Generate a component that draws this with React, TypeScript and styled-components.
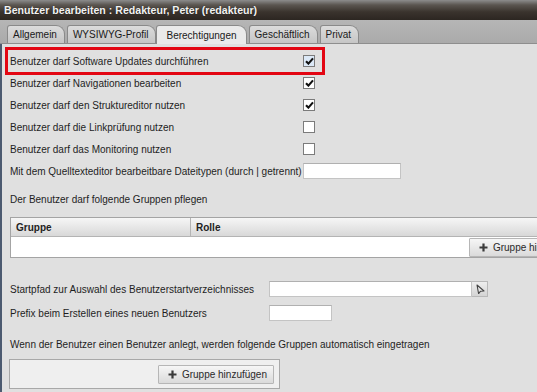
import React from 'react';
import styled, { createGlobalStyle, css } from 'styled-components';

const GlobalStyle = createGlobalStyle`
  html, body {
    margin: 0;
    padding: 0;
    overflow: hidden;
    background: #e0e0e0;
  }
  body {
    font-family: 'Liberation Sans', Arial, sans-serif;
    font-size: 10px;
    color: #1e1e1e;
  }
`;

const Window = styled.div`
  width: 600px;
  height: 392px;
  display: flex;
  flex-direction: column;
`;

const TitleBar = styled.div`
  height: 20px;
  flex: none;
  display: flex;
  align-items: center;
  padding-left: 4px;
  background: linear-gradient(#8c8c8c 0%, #5a5550 25%, #3a332d 60%, #2c2621 100%);
  color: #f2f2f2;
  font-weight: bold;
  font-size: 10.6px;
  text-shadow: 0 0 1px rgba(0, 0, 0, 0.6);
`;

const TabBar = styled.div`
  height: 23px;
  flex: none;
  display: flex;
  align-items: flex-end;
  gap: 2px;
  padding-left: 7px;
  background: linear-gradient(#b6b6b6, #aaaaaa);
  border-bottom: 1px solid #8e8e8e;
`;

const Tab = styled.div<{ active?: boolean }>`
  height: 17px;
  display: flex;
  align-items: center;
  padding: 0 7px 0 5px;
  border: 1px solid #8a8a8a;
  border-bottom: none;
  border-radius: 3px 9px 0 0;
  font-size: 10px;
  color: #1a1a1a;
  background: linear-gradient(#dcdcdc, #c6c6c6);
  ${({ active }) =>
    active &&
    css`
      position: relative;
      height: 18px;
      margin: 0 0 -1px -2px;
      padding: 0 9px 0 9px;
      background: #eaeaea;
    `}
`;

const Content = styled.div`
  flex: 1;
  background: #e0e0e0;
  border-left: 2px solid #4c5a70;
  padding: 6px 0 0 6px;
  display: flex;
  flex-direction: column;
  align-items: flex-start;
`;

const Row = styled.div<{ highlighted?: boolean; labelWidth?: number; gap?: number }>`
  height: 22px;
  width: 314px;
  margin-top: ${({ gap = 0 }) => gap}px;
  display: grid;
  grid-template-columns: ${({ labelWidth = 293 }) => labelWidth}px auto;
  align-items: center;
  padding-left: 2px;
  box-sizing: border-box;
  ${({ highlighted }) =>
    highlighted &&
    css`
      outline: 3px solid #e30613;
      outline-offset: -0.5px;
    `}
`;

const FormRow = styled(Row)`
  width: auto;
`;

const Label = styled.span`
  white-space: nowrap;
`;

const CheckBox = styled.span<{ focused?: boolean }>`
  width: 10px;
  height: 10px;
  border: 1px solid #7b7b7b;
  background: ${({ focused }) => (focused ? '#dce9f7' : '#ffffff')};
  display: flex;
  align-items: center;
  justify-content: center;
`;

const TextInput = styled.div<{ width: number }>`
  width: ${({ width }) => width}px;
  height: 14px;
  background: #fff;
  border: 1px solid #c4c4c4;
  border-top-color: #b0b0b0;
`;

const PickerField = styled.div`
  display: flex;
  align-items: center;
`;

const PickerButton = styled.div`
  width: 15px;
  height: 14px;
  border: 1px solid #b8b8b8;
  border-left: none;
  background: linear-gradient(#eeeeee, #d4d4d4);
  display: flex;
  align-items: center;
  justify-content: center;
`;

const SectionText = styled.div<{ gap: number }>`
  margin-top: ${({ gap }) => gap}px;
  margin-left: 2px;
  height: 14px;
  line-height: 14px;
  white-space: nowrap;
`;

const GroupTable = styled.div`
  margin: 10px 0 20px 2px;
  width: 578px;
  border: 1px solid #a4a4a4;
  background: #fff;
`;

const TableHead = styled.div`
  height: 18px;
  display: grid;
  grid-template-columns: 179px 1fr;
  background: linear-gradient(#f6f6f6, #d8d8d8);
  border-bottom: 1px solid #b4b4b4;
  font-weight: bold;
  color: #222;
`;

const HeadCell = styled.div`
  display: flex;
  align-items: center;
  padding-left: 5px;
  & + & {
    border-left: 1px solid #b4b4b4;
  }
`;

const TableBody = styled.div`
  height: 20px;
  display: flex;
  align-items: center;
  justify-content: flex-end;
  padding-right: 4px;
`;

const AddButton = styled.div`
  height: 17px;
  display: flex;
  align-items: center;
  gap: 5px;
  padding: 0 6px 0 9px;
  border: 1px solid #b6b6b6;
  border-radius: 1px;
  background: linear-gradient(#f6f6f6, #dadada);
  color: #2a2a2a;
  white-space: nowrap;
`;

const AutoGroupBox = styled.div`
  margin: 7px 0 0 1px;
  width: 264px;
  height: 28px;
  border: 1px solid #a8a8a8;
  background: #efefef;
  display: flex;
  align-items: center;
  justify-content: flex-end;
  padding-right: 5px;
`;

const Check = () => (
  <svg width="9" height="8" viewBox="0 0 9 8">
    <path d="M1 4.2 L3.4 6.6 L8 1.4" fill="none" stroke="#111" strokeWidth="2.1" />
  </svg>
);

const Plus = () => (
  <svg width="9" height="9" viewBox="0 0 9 9">
    <path d="M4.5 0.5 V8.5 M0.5 4.5 H8.5" stroke="#3a3a3a" strokeWidth="2.2" />
  </svg>
);

const Pointer = () => (
  <svg width="10" height="10" viewBox="0 0 10 10">
    <path d="M2 1 L9 7 L5.6 7.2 L3.6 9.6 Z" fill="#e8e8e8" stroke="#444" strokeWidth="1.1" strokeLinejoin="round" />
  </svg>
);

const tabs = ['Allgemein', 'WYSIWYG-Profil', 'Berechtigungen', 'Geschäftlich', 'Privat'];

const permissions = [
  { label: 'Benutzer darf Software Updates durchführen', checked: true, highlighted: true },
  { label: 'Benutzer darf Navigationen bearbeiten', checked: true },
  { label: 'Benutzer darf den Struktureditor nutzen', checked: true },
  { label: 'Benutzer darf die Linkprüfung nutzen', checked: false },
  { label: 'Benutzer darf das Monitoring nutzen', checked: false },
];

export default function App() {
  return (
    <>
      <GlobalStyle />
      <Window>
        <TitleBar>Benutzer bearbeiten : Redakteur, Peter (redakteur)</TitleBar>
        <TabBar>
          {tabs.map((t) => (
            <Tab key={t} active={t === 'Berechtigungen'}>
              {t}
            </Tab>
          ))}
        </TabBar>
        <Content>
          {permissions.map((p) => (
            <Row key={p.label} highlighted={p.highlighted}>
              <Label>{p.label}</Label>
              <CheckBox focused={p.highlighted}>{p.checked && <Check />}</CheckBox>
            </Row>
          ))}
          <FormRow>
            <Label>Mit dem Quelltexteditor bearbeitbare Dateitypen (durch | getrennt)</Label>
            <TextInput width={96} />
          </FormRow>

          <SectionText gap={11}>Der Benutzer darf folgende Gruppen pflegen</SectionText>
          <GroupTable>
            <TableHead>
              <HeadCell>Gruppe</HeadCell>
              <HeadCell>Rolle</HeadCell>
            </TableHead>
            <TableBody>
              <AddButton>
                <Plus />
                Gruppe hinzufügen
              </AddButton>
            </TableBody>
          </GroupTable>

          <FormRow labelWidth={259}>
            <Label>Startpfad zur Auswahl des Benutzerstartverzeichnisses</Label>
            <PickerField>
              <TextInput width={201} />
              <PickerButton>
                <Pointer />
              </PickerButton>
            </PickerField>
          </FormRow>
          <FormRow labelWidth={259} gap={2}>
            <Label>Prefix beim Erstellen eines neuen Benutzers</Label>
            <TextInput width={61} />
          </FormRow>

          <SectionText gap={14}>
            Wenn der Benutzer einen Benutzer anlegt, werden folgende Gruppen automatisch eingetragen
          </SectionText>
          <AutoGroupBox>
            <AddButton>
              <Plus />
              Gruppe hinzufügen
            </AddButton>
          </AutoGroupBox>
        </Content>
      </Window>
    </>
  );
}
